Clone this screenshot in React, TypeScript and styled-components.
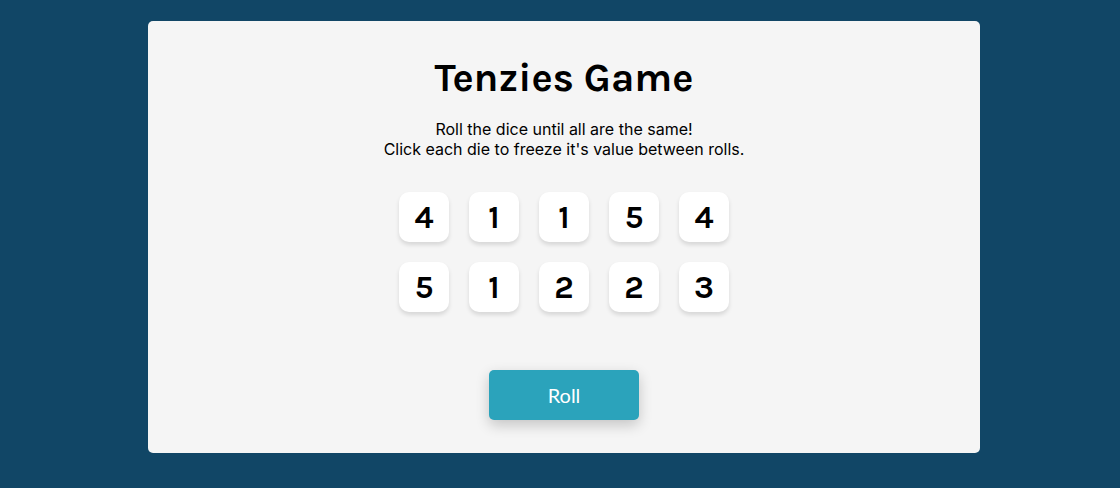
import React, { useState } from 'react';
import styled, { createGlobalStyle } from 'styled-components';

const GlobalStyle = createGlobalStyle`
  * { box-sizing: border-box; }
  body {
    margin: 0;
    padding: 21px 140px 35px 148px;
    background: #114666;
    color: #000;
    font-family: Inter, sans-serif;
  }
`;

const Board = styled.main`
  display: flex;
  flex-direction: column;
  align-items: center;
  padding: 32px 20px 33px;
  border-radius: 5px;
  background: #f5f5f5;
`;

const Title = styled.h1`
  margin: 0;
  font-family: Karla, "Noto Sans", sans-serif;
  font-size: 40px;
  line-height: 50px;
  font-weight: 700;
`;

const Instructions = styled.p`
  margin: 16px 0 33px;
  font-size: 16px;
  line-height: 20px;
  text-align: center;
`;

const DiceGrid = styled.div`
  display: grid;
  grid-template-columns: repeat(5, 50px);
  gap: 20px;
  margin-bottom: 58px;
`;

const Die = styled.button<{ $held: boolean }>`
  height: 50px;
  padding: 0;
  border: 0;
  border-radius: 10px;
  background: ${({ $held }) => ($held ? '#59e391' : '#fff')};
  box-shadow: 0 3px 4px rgba(0, 0, 0, 0.12);
  color: #000;
  font-family: Karla, Inter, sans-serif;
  font-size: 32px;
  font-weight: 700;
  cursor: pointer;
`;

const RollButton = styled.button`
  width: 150px;
  height: 50px;
  border: 0;
  border-radius: 5px;
  background: #2ba3bb;
  box-shadow: 0 5px 14px rgba(0, 0, 0, 0.2);
  color: #fff;
  font-family: Lato, sans-serif;
  font-size: 20px;
  cursor: pointer;
`;

type DieState = { value: number; held: boolean };

const initialDice: DieState[] = [4, 1, 1, 5, 4, 5, 1, 2, 2, 3].map((value) => ({ value, held: false }));

export default function App() {
  const [dice, setDice] = useState(initialDice);

  const toggle = (index: number) =>
    setDice((prev) => prev.map((die, i) => (i === index ? { ...die, held: !die.held } : die)));

  const roll = () =>
    setDice((prev) => prev.map((die) => (die.held ? die : { ...die, value: Math.ceil(Math.random() * 6) })));

  return (
    <>
      <GlobalStyle />
      <Board>
        <Title>Tenzies Game</Title>
        <Instructions>
          Roll the dice until all are the same!
          <br />
          Click each die to freeze it's value between rolls.
        </Instructions>
        <DiceGrid>
          {dice.map((die, index) => (
            <Die key={index} type="button" $held={die.held} aria-pressed={die.held} onClick={() => toggle(index)}>
              {die.value}
            </Die>
          ))}
        </DiceGrid>
        <RollButton type="button" onClick={roll}>Roll</RollButton>
      </Board>
    </>
  );
}
